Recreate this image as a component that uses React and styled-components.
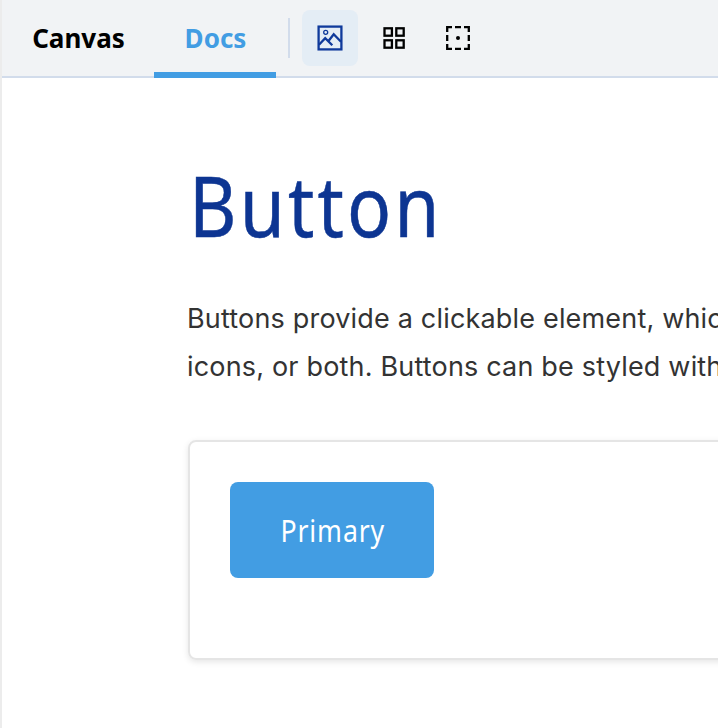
import React from "react";
import styled, { createGlobalStyle } from "styled-components";

const GlobalStyle = createGlobalStyle`
  *, *::before, *::after { box-sizing: border-box; }
  body { margin: 0; background: #fff; overflow: hidden; }
`;

const Page = styled.div`
  width: 100%;
  height: 728px;
  overflow: hidden;
  border-left: 2px solid #ececec;
  background: #fff;
`;

const Toolbar = styled.header`
  display: flex;
  align-items: flex-start;
  height: 78px;
  background: #f1f3f5;
  border-bottom: 2px solid #d2dceb;
`;

const Tab = styled.button`
  flex: none;
  width: ${(p) => p.$width}px;
  height: 78px;
  padding: 0 0 3px 1px;
  border: 0;
  border-top: 6px solid transparent;
  border-bottom: 6px solid ${(p) => (p.$active ? "#429de3" : "transparent")};
  background: none;
  color: ${(p) => (p.$active ? "#429de3" : "#000")};
  font: 700 26px/62px "Noto Sans", sans-serif;
  white-space: nowrap;
`;

const Divider = styled.span`
  flex: none;
  width: 2px;
  height: 40px;
  margin: 18px 12px 0;
  background: #d2dceb;
`;

const Tools = styled.div`
  display: flex;
  gap: 8px;
  padding-top: 10px;
`;

const IconButton = styled.button`
  display: grid;
  place-items: center;
  width: 56px;
  height: 56px;
  padding: 0;
  border: 0;
  border-radius: 8px;
  background: ${(p) => (p.$active ? "#e4edf5" : "transparent")};
  color: ${(p) => (p.$active ? "#0f3a9b" : "#000")};
`;

const Icon = styled.svg`
  width: 28px;
  height: 28px;
  fill: none;
  stroke: currentColor;
  stroke-width: 2.3;
`;

const Content = styled.main`
  padding: 77px 0 0 185px;
`;

const Title = styled.h1`
  margin: 0 0 0 2px;
  height: 100px;
  color: #0d3592;
  font: 400 84px/100px "Noto Sans", sans-serif;
  letter-spacing: 3.6px;
  white-space: nowrap;
  -webkit-text-stroke: 0.5px #0d3592;
  transform: scaleX(0.87);
  transform-origin: 0 50%;
`;

const Description = styled.p`
  margin: 40px 0 0;
  color: #333;
  font: 400 27px/48px Inter, sans-serif;
  letter-spacing: 0.18px;
  white-space: nowrap;
`;

const Preview = styled.section`
  width: 1000px;
  height: 220px;
  margin: 49px 0 0 1px;
  padding: 40px;
  border: 2px solid #e5e5e5;
  border-radius: 8px;
  box-shadow: 0 2px 6px rgba(0, 0, 0, 0.1);
`;

const PrimaryButton = styled.button`
  width: 204px;
  height: 96px;
  padding: 0 0 0 1px;
  border: 0;
  border-radius: 8px;
  background: #429de3;
  color: #fff;
  font: 400 31px/40px "Noto Sans", sans-serif;
  letter-spacing: 1px;
`;

const ButtonLabel = styled.span`
  display: inline-block;
  transform: scaleX(0.86);
`;

function PhotoIcon() {
  return (
    <Icon viewBox="0 0 28 28">
      <rect x="2.6" y="2.6" width="22.8" height="22.8" />
      <circle cx="9.7" cy="8.3" r="2" strokeWidth="1.3" />
      <path d="M3 20.8 9.2 14.2 16.3 21.2 M12.3 17.2 17.7 10.3 25 17.8" />
    </Icon>
  );
}

function GridIcon() {
  return (
    <Icon viewBox="0 0 28 28">
      <rect x="4.5" y="4.3" width="7.4" height="7.4" />
      <rect x="16.3" y="4.3" width="7.4" height="7.4" />
      <rect x="4.5" y="16.3" width="7.4" height="7.4" />
      <rect x="16.3" y="16.3" width="7.4" height="7.4" />
    </Icon>
  );
}

function OutlineIcon() {
  return (
    <Icon viewBox="0 0 28 28">
      <path d="M3.2 8V3.2H8 M11 3.2h6 M20 3.2h4.8V8 M24.8 11v6 M24.8 20v4.8H20 M17 24.8h-6 M8 24.8H3.2V20 M3.2 17v-6" />
      <circle cx="14" cy="14" r="2" fill="currentColor" stroke="none" />
    </Icon>
  );
}

export default function App() {
  return (
    <>
      <GlobalStyle />
      <Page>
        <Toolbar>
          <Tab $width={152}>Canvas</Tab>
          <Tab $width={122} $active>Docs</Tab>
          <Divider />
          <Tools>
            <IconButton $active aria-label="Background"><PhotoIcon /></IconButton>
            <IconButton aria-label="Grid"><GridIcon /></IconButton>
            <IconButton aria-label="Outline"><OutlineIcon /></IconButton>
          </Tools>
        </Toolbar>
        <Content>
          <Title>Button</Title>
          <Description>
            Buttons provide a clickable element, whic
            <br />
            icons, or both. Buttons can be styled with
          </Description>
          <Preview>
            <PrimaryButton><ButtonLabel>Primary</ButtonLabel></PrimaryButton>
          </Preview>
        </Content>
      </Page>
    </>
  );
}
